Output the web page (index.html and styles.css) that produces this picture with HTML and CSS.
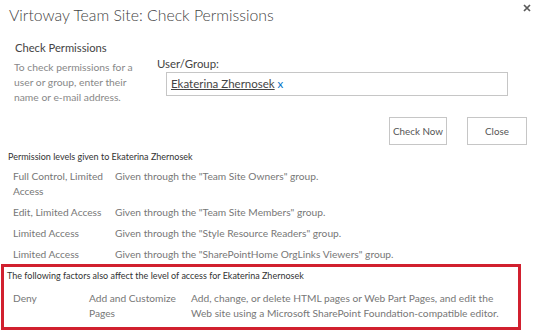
FILE: index.html
```html
<!DOCTYPE html>
<html lang="en">
<head>
  <meta charset="UTF-8">
  <title>Virtoway Team Site: Check Permissions</title>
  <link rel="stylesheet" href="styles.css">
</head>
<body>
  <div class="dialog">
    <header class="dialog-header">
      <h1>Virtoway Team Site: Check Permissions</h1>
      <svg class="close-x" width="8" height="8" viewBox="0 0 8 8">
        <path d="M1 1 L7 7 M7 1 L1 7" stroke="#5a5a5a" stroke-width="1.7" fill="none"/>
      </svg>
    </header>

    <section class="check-form">
      <div class="check-info">
        <h2>Check Permissions</h2>
        <p>To check permissions for a user or group, enter their name or e-mail address.</p>
      </div>
      <div class="check-input">
        <label>User/Group:</label>
        <div class="people-box">
          <span class="person">Ekaterina Zhernosek</span> <span class="remove">x</span>
        </div>
      </div>
    </section>

    <div class="buttons">
      <button class="btn-check">Check Now</button>
      <button class="btn-close">Close</button>
    </div>

    <p class="small-heading">Permission levels given to Ekaterina Zhernosek</p>
    <div class="perm-list">
      <div class="perm-row">
        <span class="level">Full Control, Limited Access</span>
        <span>Given through the "Team Site Owners" group.</span>
      </div>
      <div class="perm-row">
        <span class="level">Edit, Limited Access</span>
        <span>Given through the "Team Site Members" group.</span>
      </div>
      <div class="perm-row">
        <span class="level">Limited Access</span>
        <span>Given through the "Style Resource Readers" group.</span>
      </div>
      <div class="perm-row">
        <span class="level">Limited Access</span>
        <span>Given through the "SharePointHome OrgLinks Viewers" group.</span>
      </div>
    </div>

    <div class="factors">
      <p class="small-heading">The following factors also affect the level of access for Ekaterina Zhernosek</p>
      <div class="factor-row">
        <span class="kind">Deny</span>
        <span class="right">Add and Customize Pages</span>
        <span class="detail">Add, change, or delete HTML pages or Web Part Pages, and edit the Web site using a Microsoft SharePoint Foundation-compatible editor.</span>
      </div>
    </div>
  </div>
</body>
</html>
```

FILE: styles.css
```css
body {
  margin: 0;
  padding: 0;
  background-color: #fff;
  font-family: Lato, "Open Sans", sans-serif;
  color: #777;
}

.dialog {
  width: 533px;
  height: 332px;
  overflow: hidden;
}

.dialog-header {
  display: flex;
  justify-content: space-between;
  align-items: flex-start;
  padding: 4px 2px 0 9px;
}

.dialog-header h1 {
  margin: 0;
  font-size: 15.8px;
  font-weight: 300;
  color: #444;
  line-height: 22px;
}

.close-x {
  display: block;
  margin-top: 0;
}

.check-form {
  display: flex;
  padding: 14px 0 0 14px;
}

.check-info {
  width: 130px;
}

.check-info h2 {
  margin: 0 0 4px 1px;
  font-size: 11.2px;
  font-weight: normal;
  color: #444;
  line-height: 16px;
}

.check-info p {
  margin: 0;
  font-size: 10.3px;
  line-height: 15px;
  color: #888;
}

.check-input {
  flex: 1;
  padding: 16px 25px 0 13px;
}

.check-input label {
  display: block;
  font-size: 11.4px;
  color: #444;
  line-height: 16px;
}

.people-box {
  margin: 0 0 0 9px;
  height: 22px;
  border: 1px solid #c6c6c6;
  padding: 0 4px;
  font-size: 11.5px;
  line-height: 22px;
}

.person {
  color: #444;
  text-decoration: underline;
}

.remove {
  color: #0072c6;
}

.buttons {
  display: flex;
  justify-content: flex-end;
  gap: 20px;
  padding: 12px 6px 0 0;
}

.buttons button {
  height: 28px;
  padding: 0;
  border: 1px solid #c6c6c6;
  background-color: #fff;
  font-family: inherit;
  font-size: 9.8px;
  color: #555;
}

.btn-check {
  width: 58px;
}

.btn-close {
  width: 60px;
}

.small-heading {
  margin: 6px 0 0 8px;
  font-size: 9px;
  color: #333;
  line-height: 12px;
}

.perm-list {
  padding: 6px 0 0 13px;
  font-size: 10.2px;
  line-height: 15px;
}

.perm-row {
  display: flex;
  margin-bottom: 6px;
}

.perm-row .level {
  width: 102px;
  flex-shrink: 0;
}

.factors {
  margin: -4px 0 0 1px;
  width: 514px;
  height: 60px;
  border: 3px solid #d1202f;
}

.factors .small-heading {
  margin: 3px 0 0 3px;
}

.factor-row {
  display: flex;
  padding: 9px 0 0 9px;
  font-size: 10.2px;
  line-height: 15px;
}

.factor-row .kind {
  width: 76px;
  flex-shrink: 0;
}

.factor-row .right {
  width: 102px;
  flex-shrink: 0;
}

.factor-row .detail {
  width: 316px;
  flex-shrink: 0;
}
```
